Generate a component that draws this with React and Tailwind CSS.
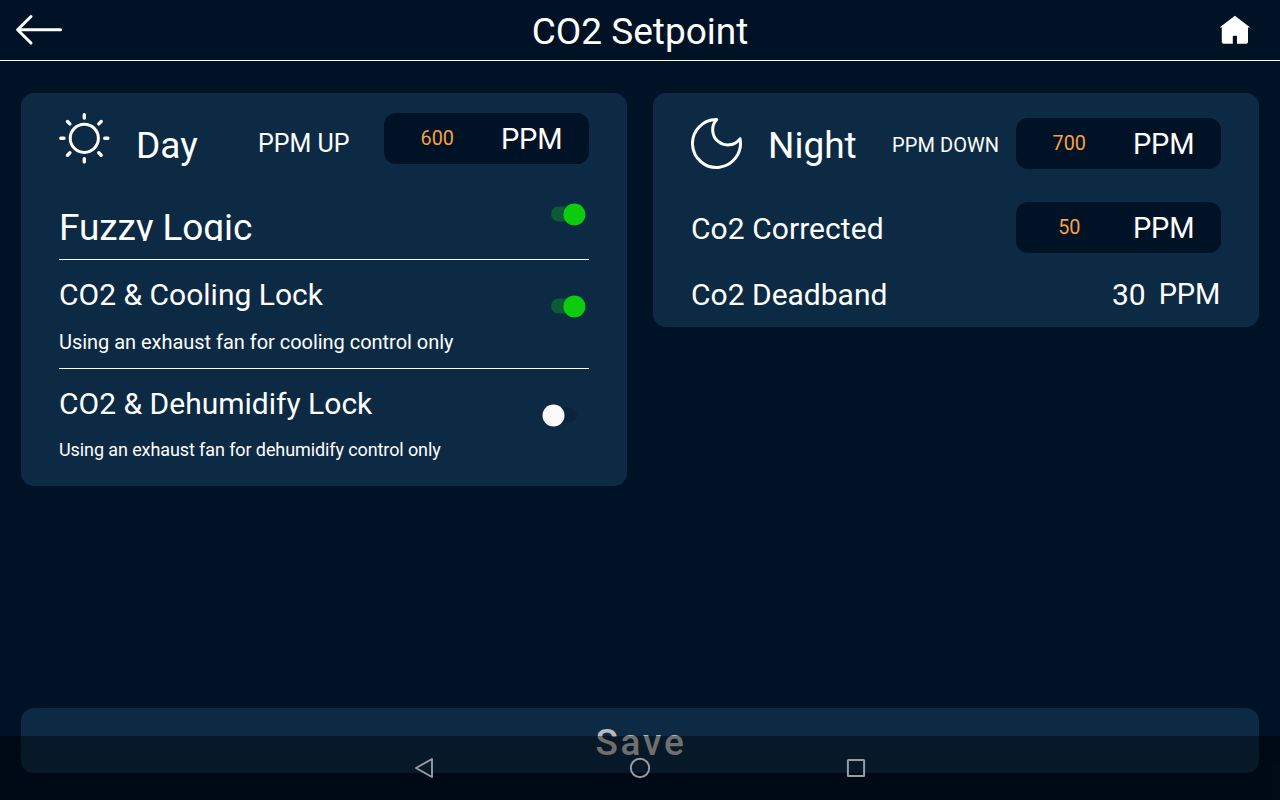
import React from 'react';

function Toggle({ on, className }) {
  return (
    <svg className={`shrink-0 overflow-visible ${className}`} width="36" height="24" viewBox="0 0 36 24">
      {on ? (
        <>
          <rect x="0" y="4.5" width="33" height="15" rx="7.5" fill="#0d5a37" />
          <circle cx="23.4" cy="13.2" r="11" fill="#000" opacity="0.18" />
          <circle cx="23.4" cy="12.5" r="11" fill="#0dcb0d" />
        </>
      ) : (
        <>
          <rect x="1" y="4.5" width="33" height="15" rx="7.5" fill="#0b243c" />
          <circle cx="10.5" cy="13.2" r="11" fill="#000" opacity="0.18" />
          <circle cx="10.5" cy="12.5" r="11" fill="#fafafa" />
        </>
      )}
    </svg>
  );
}

function Field({ value, className }) {
  return (
    <div className={`flex h-[51px] w-[205px] shrink-0 items-start rounded-[12px] bg-[#001226] ${className}`}>
      <span className="mt-[14px] w-[106.5px] text-center text-[19.8px] leading-[24px] text-[#f9a03f]">{value}</span>
      <span className="mt-[10px] ml-[10.5px] text-[29px] leading-[32px] tracking-[-0.2px]">PPM</span>
    </div>
  );
}

function SunIcon() {
  return (
    <svg className="mt-[20px] shrink-0" width="52" height="52" viewBox="0 0 52 52" fill="none" stroke="#fff" strokeWidth="3" strokeLinecap="round">
      <circle cx="25.3" cy="25.3" r="14.1" />
      <path strokeWidth="3.4" d="M25.3 1.8v3.2M25.3 45.7v3.2M1.8 25.3h3.2M45.7 25.3h3.2M8.5 8.5l2.4 2.4M39.8 39.8l2.4 2.4M8.5 42.2l2.4-2.4M39.8 10.9l2.4-2.4" />
    </svg>
  );
}

function MoonIcon() {
  return (
    <svg className="mt-[25px] shrink-0" width="52" height="52" viewBox="0 0 52 52" fill="none" stroke="#fff" strokeWidth="3" strokeLinejoin="round">
      <path d="M25.7 1.5A24 24 0 1 0 49 20.8A15.15 15.15 0 1 1 25.7 1.5Z" />
    </svg>
  );
}

export default function App() {
  return (
    <div className="relative flex h-[800px] w-[1280px] flex-col overflow-hidden bg-[#001226] font-[Roboto,sans-serif] whitespace-nowrap text-white">
      <header className="flex h-[61px] shrink-0 items-start justify-between border-b border-white px-[15px]">
        <svg className="mt-[14px]" width="48" height="32" viewBox="0 0 48 32" fill="none" stroke="#fff" strokeWidth="3" strokeLinecap="round" strokeLinejoin="round">
          <path d="M16 2.5L2.6 15.8L16 29M3 15.8H45.5" />
        </svg>
        <h1 className="mt-[12px] text-[37px] leading-[40px]">CO2 Setpoint</h1>
        <svg className="mt-[15px] mr-[14px] ml-[3px] overflow-visible" width="31" height="30" viewBox="0 0 31 30" fill="#fff">
          <path d="M14.9 .8L30.2 12.4H28V27Q28 28.8 26.2 28.8H17V21.6Q17 20.7 16.1 20.7H13.7Q12.8 20.7 12.8 21.6V28.8H3.6Q1.8 28.8 1.8 27V12.4H-.4Z" />
        </svg>
      </header>

      <main className="mt-[32px] flex items-start gap-[26px] px-[21px]">
        <section className="flex h-[393px] w-[606px] flex-col rounded-[13px] bg-[#0d2a45] px-[38px]">
          <div className="flex h-[109px] items-start">
            <SunIcon />
            <h2 className="mt-[33px] ml-[25px] w-[122px] text-[37px] leading-[40px]">Day</h2>
            <span className="mt-[36px] text-[25px] leading-[30px]">PPM UP</span>
            <Field value="600" className="mt-[20px] ml-auto" />
          </div>
          <div className="flex h-[58px] items-start justify-between border-b border-white">
            <span className="mt-[6px] h-[33px] overflow-hidden text-[37px] leading-[40px] tracking-[-0.07px]">Fuzzy Logic</span>
            <Toggle on className="mr-[2px]" />
          </div>
          <div className="flex h-[109px] items-start justify-between border-b border-white">
            <div className="flex flex-col">
              <span className="mt-[17px] text-[30px] leading-[36px]">CO2 &amp; Cooling Lock</span>
              <span className="mt-[17px] text-[20px] leading-[24px] tracking-[-0.03px]">Using an exhaust fan for cooling control only</span>
            </div>
            <Toggle on className="mt-[34px] mr-[2px]" />
          </div>
          <div className="flex items-start justify-between">
            <div className="flex flex-col">
              <span className="mt-[17px] text-[30px] leading-[36px]">CO2 &amp; Dehumidify Lock</span>
              <span className="mt-[16px] text-[18px] leading-[24px] tracking-[-0.1px]">Using an exhaust fan for dehumidify control only</span>
            </div>
            <Toggle className="mt-[34px] mr-[10px]" />
          </div>
        </section>

        <section className="flex h-[234px] w-[606px] flex-col rounded-[13px] bg-[#0d2a45] px-[38px]">
          <div className="flex h-[109px] items-start">
            <MoonIcon />
            <h2 className="mt-[33px] ml-[25px] w-[124px] text-[37px] leading-[40px]">Night</h2>
            <span className="mt-[40px] text-[20px] leading-[24px] tracking-[0.08px]">PPM DOWN</span>
            <Field value="700" className="mt-[25px] ml-auto" />
          </div>
          <div className="flex h-[75px] items-start justify-between">
            <span className="mt-[9px] text-[30px] leading-[36px] tracking-[0.06px]">Co2 Corrected</span>
            <Field value="50" />
          </div>
          <div className="flex items-start">
            <span className="text-[30px] leading-[36px]">Co2 Deadband</span>
            <span className="ml-auto text-[30px] leading-[36px]">30</span>
            <span className="mr-[1px] ml-[13px] text-[29px] leading-[34px] tracking-[-0.2px]">PPM</span>
          </div>
        </section>
      </main>

      <button className="mx-[21px] mt-[222px] flex h-[65px] shrink-0 items-start justify-center rounded-[13px] bg-[#0d2a45]">
        <span className="mt-[15px] ml-[2px] text-[37px] leading-[40px] font-medium tracking-[2.8px] text-[#b9b9b9]">Save</span>
      </button>

      <nav className="absolute inset-x-0 bottom-0 flex h-[64px] items-center justify-center gap-[192px] bg-black/40">
        <svg width="24" height="24" viewBox="0 0 24 24" fill="none" stroke="#969ca1" strokeWidth="1.9" strokeLinejoin="round">
          <path d="M20 3V21L4 12Z" />
        </svg>
        <svg width="24" height="24" viewBox="0 0 24 24" fill="none" stroke="#969ca1" strokeWidth="1.9">
          <circle cx="12" cy="12" r="9.2" />
        </svg>
        <svg width="24" height="24" viewBox="0 0 24 24" fill="none" stroke="#969ca1" strokeWidth="2">
          <rect x="3.9" y="3.9" width="16.2" height="16.2" rx="0.5" />
        </svg>
      </nav>
    </div>
  );
}
